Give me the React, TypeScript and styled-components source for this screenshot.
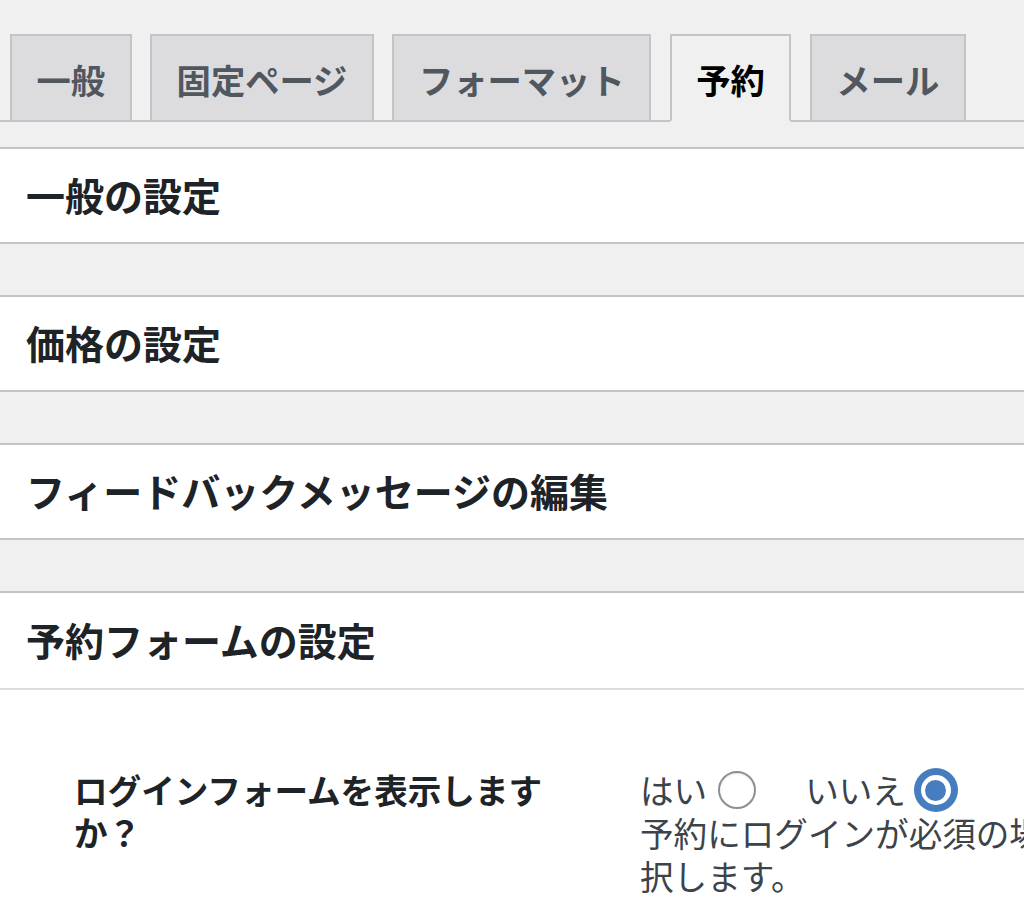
import React from "react";
import styled, { createGlobalStyle } from "styled-components";

const GlobalStyle = createGlobalStyle`
  html, body {
    margin: 0;
    padding: 0;
    background: #f0f0f1;
    overflow: hidden;
  }
  body {
    font-family: "Noto Sans CJK JP", "Noto Sans", sans-serif;
    color: #1d2327;
  }
`;

const Page = styled.div`
  width: 1400px;
  min-height: 913px;
  background: #f0f0f1;
`;

const TabBar = styled.nav`
  display: flex;
  align-items: flex-end;
  gap: 18.5px;
  padding: 34px 0 0 10px;
  border-bottom: 2px solid #c3c4c7;
`;

const Tab = styled.a<{ $active?: boolean }>`
  display: flex;
  align-items: center;
  justify-content: center;
  box-sizing: border-box;
  height: 88px;
  margin-bottom: -2px;
  padding: 2px 24.5px 0;
  border: 2px solid #c3c4c7;
  border-bottom-color: ${(p) => (p.$active ? "#f0f0f1" : "#c3c4c7")};
  background: ${(p) => (p.$active ? "#f0f0f1" : "#dcdcde")};
  color: ${(p) => (p.$active ? "#000" : "#50575e")};
  font-size: 34.3px;
  font-weight: 700;
  line-height: 1;
  text-decoration: none;
  white-space: nowrap;
`;

const Sections = styled.div`
  display: flex;
  flex-direction: column;
  gap: 51px;
  margin-top: 25px;
`;

const Box = styled.section`
  background: #fff;
  border-top: 2px solid #c3c4c7;
  border-bottom: 2px solid #c3c4c7;
`;

const OpenBox = styled(Box)`
  border-bottom: none;
  min-height: 400px;
`;

const Heading = styled.h2<{ $divided?: boolean }>`
  display: flex;
  align-items: center;
  box-sizing: border-box;
  height: ${(p) => (p.$divided ? "97px" : "93px")};
  margin: 0;
  padding: 0 0 3px 26px;
  font-size: 39px;
  font-weight: 700;
  color: #1d2327;
  border-bottom: ${(p) => (p.$divided ? "2px solid #dcdcde" : "none")};
`;

const FormRow = styled.div`
  display: grid;
  grid-template-columns: 480px 680px;
  column-gap: 86px;
  padding: 79px 0 0 74px;
`;

const Label = styled.div`
  font-size: 33.6px;
  font-weight: 700;
  line-height: 42px;
  color: #1d2327;
`;

const Field = styled.div`
  font-size: 33.6px;
  line-height: 42px;
  color: #3c434a;
`;

const Choices = styled.div`
  display: flex;
  align-items: center;
  gap: 49px;
`;

const Choice = styled.label`
  display: inline-flex;
  align-items: center;
`;

const Radio = styled.input.attrs({ type: "radio" })`
  appearance: none;
  -webkit-appearance: none;
  box-sizing: border-box;
  width: 38px;
  height: 38px;
  margin: 0 0 0 11px;
  border-radius: 50%;
  border: 2.4px solid #8c8f94;
  background: #fff;
  box-shadow: inset 0 1px 2px rgba(0, 0, 0, 0.1);
  display: inline-flex;
  align-items: center;
  justify-content: center;

  &:checked {
    border: 4px solid #467dbf;
    box-shadow: 0 0 0 3px #467dbf;
  }
  &:checked::before {
    content: "";
    width: 21px;
    height: 21px;
    border-radius: 50%;
    background: #467dbf;
  }
`;

const Description = styled.p`
  margin: 0;
  line-height: 43px;
`;

const tabs = ["一般", "固定ページ", "フォーマット", "予約", "メール"];
const sections = ["一般の設定", "価格の設定", "フィードバックメッセージの編集"];

export default function App() {
  return (
    <Page>
      <GlobalStyle />
      <TabBar>
        {tabs.map((t) => (
          <Tab key={t} href="#" $active={t === "予約"}>
            {t}
          </Tab>
        ))}
      </TabBar>
      <Sections>
        {sections.map((s) => (
          <Box key={s}>
            <Heading>{s}</Heading>
          </Box>
        ))}
        <OpenBox>
          <Heading $divided>予約フォームの設定</Heading>
          <FormRow>
            <Label>ログインフォームを表示しますか？</Label>
            <Field>
              <Choices>
                <Choice>
                  はい
                  <Radio name="login-form" value="yes" />
                </Choice>
                <Choice>
                  いいえ
                  <Radio name="login-form" value="no" defaultChecked />
                </Choice>
              </Choices>
              <Description>
                予約にログインが必須の場合は「はい」を選択します。
              </Description>
            </Field>
          </FormRow>
        </OpenBox>
      </Sections>
    </Page>
  );
}
